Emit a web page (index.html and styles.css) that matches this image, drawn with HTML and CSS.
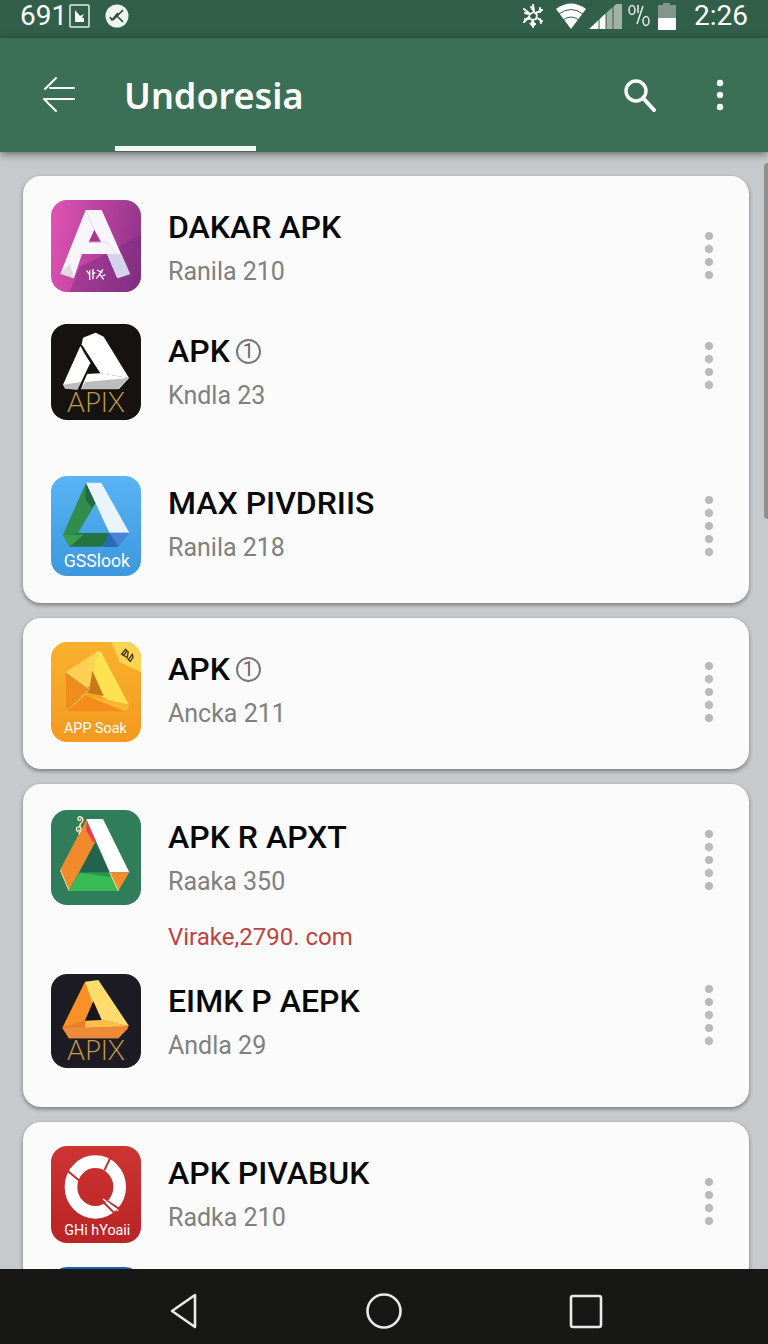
FILE: index.html
```
<!DOCTYPE html>
<html lang="en">
<head>
    <meta charset="UTF-8">
    <meta name="viewport" content="width=device-width, initial-scale=1.0">
    <title>Undoresia</title>
    <link rel="stylesheet" href="styles.css">
</head>
<body>
    <div class="status-bar">
        <span class="status-text">691</span>
        <svg class="status-note" width="22" height="26" viewBox="0 0 22 26">
            <rect x="1" y="2" width="19" height="22" rx="1" fill="none" stroke="#e4eee8" stroke-width="1.5"/>
            <path d="M6 7l5 6 4-2-2 4 2 0v4H6z" fill="#fff"/>
        </svg>
        <svg width="24" height="24" viewBox="0 0 24 24">
            <circle cx="12" cy="12" r="11.5" fill="#f0f4f1"/>
            <path d="M5 13l2 3 6-7M8 16L18 6M12 12l6 6" fill="none" stroke="#29483a" stroke-width="1.6"/>
        </svg>
        <div class="status-right">
            <svg width="22" height="26" viewBox="0 0 22 26" fill="none" stroke="#fff" stroke-width="2" stroke-linecap="round">
                <path d="M11 2l1 7M11 18v6M2 6l6 5M2 19l5-5M20 7l-6 3M20 18l-5-3M9 4l2 3M3 10l4 1M18 5l0 4M3 16l4 0M19 20l-1-4"/>
                <path d="M8 11l4-2 3 3-1 4-4 1-3-3z" stroke-width="1.6"/>
                <path d="M11 18l3 3-3 3-3-3z" fill="#fff" stroke-width="1"/>
            </svg>
            <svg class="wifi" width="32" height="26" viewBox="0 0 32 26">
                <path d="M1 6Q16-5 31 6L16 26z" fill="#fff"/>
                <path d="M4 11Q16 2 28 11M8 17Q16 11 24 17" fill="none" stroke="#315f49" stroke-width="1"/>
            </svg>
            <svg width="33" height="26" viewBox="0 0 33 26">
                <path d="M24 4l3-3h6v25H17V10z" fill="#a0b2a6"/>
                <path d="M0 26L17 10v16z" fill="#fff"/>
                <path d="M10 14v12M17 8v18M24 2v24" stroke="#315f49" stroke-width="1"/>
            </svg>
            <svg class="percent" width="22" height="24" viewBox="0 0 22 24" fill="none" stroke="#e8f0eb" stroke-width="1.5">
                <ellipse cx="4" cy="6" rx="3" ry="4.5"/>
                <ellipse cx="18" cy="17" rx="3" ry="4.5"/>
                <path d="M10 1v8M15 2L9 20"/>
            </svg>
            <svg class="battery" width="18" height="28" viewBox="0 0 18 28">
                <path d="M0 3h5V1h7v2h6v13H0z" fill="#82978b"/>
                <path d="M0 16h18v12H0z" fill="#fff"/>
            </svg>
            <span class="status-text">2:26</span>
        </div>
    </div>

    <header class="app-bar">
        <button class="icon-button" aria-label="Back">
            <svg width="34" height="38" viewBox="0 0 34 38" fill="none" stroke="#fff" stroke-width="2" stroke-linecap="round" stroke-linejoin="round">
                <path d="M14 2L3 13M8 12h24M32 23H2l12 12"/>
            </svg>
        </button>
        <h1 class="tab">Undoresia</h1>
        <button class="icon-button search" aria-label="Search">
            <svg width="34" height="34" viewBox="0 0 34 34" fill="none" stroke="#fff" stroke-linecap="round">
                <circle cx="13" cy="13" r="10" stroke-width="3.4"/>
                <path d="M20 20l11 12" stroke-width="4"/>
            </svg>
        </button>
        <button class="icon-button" aria-label="Menu">
            <svg width="10" height="34" viewBox="0 0 10 34" fill="#fff">
                <circle cx="5" cy="5" r="3.2"/>
                <circle cx="5" cy="17" r="3.2"/>
                <circle cx="5" cy="29" r="3.2"/>
            </svg>
        </button>
    </header>

    <main class="content">
        <section class="card">
            <article class="app">
                <svg class="app-icon pink" viewBox="34 30 270 276">
                    <path d="M120 230l80-38 104-60v174H90z" fill="#742a78" opacity=".4"/>
                    <path d="M138 60h48l85 192-38 13-31-73h-75l-24 71-41-12z" fill="#f8f6fa"/>
                    <path d="M164 119l20 38h-37z" fill="#a9378f"/>
                    <path d="M202 192h43l26 60-38 13z" fill="#d5d2ed"/>
                    <path d="M62 251l28-30 14 42-4 2z" fill="#dddce4"/>
                    <path d="M139 62l26 58M148 156h52l30 36" fill="none" stroke="#d4ceda" stroke-width="2"/>
                    <path d="M141 242l10 14M150 240v30M160 237v31M157 252l10-4M172 240l16 8M190 238l-20 28M178 250l14 18M188 258l9-4" fill="none" stroke="#fff" stroke-width="4"/>
                </svg>
                <div class="app-text">
                    <h2>DAKAR APK</h2>
                    <p>Ranila 210</p>
                </div>
                <button class="more low" aria-label="More"><i></i><i></i><i></i><i></i></button>
            </article>
            <article class="app">
                <svg class="app-icon black" viewBox="34 28 270 288">
                    <path d="M130 69l38-15 24 12 76 124-86-14-56-87z" fill="#fff"/>
                    <path d="M122 94l32 53-37 78-40-3-7-12z" fill="#fff"/>
                    <path d="M141 178l40-3 87 15-30 33H124z" fill="#fff"/>
                    <path d="M70 210l54-8-8 21H80zM136 202l132-12-34 34H124z" fill="#bdbdbd"/>
                    <path d="M125 102l57 74h-40l13-29z" fill="#15120f"/>
                    <path d="M154 147l-38 80" stroke="#15120f" stroke-width="6"/>
                    <text class="thin-label" x="82" y="292">APIX</text>
                </svg>
                <div class="app-text">
                    <h2>APK <span class="badge">1</span></h2>
                    <p>Kndla 23</p>
                </div>
                <button class="more high" aria-label="More"><i></i><i></i><i></i><i></i></button>
            </article>
            <article class="app spaced">
                <svg class="app-icon blue" viewBox="34 34 270 300">
                    <path d="M139 54l30 60-54 91-45 5z" fill="#328c4b"/>
                    <path d="M139 54l30 60-12 14-20-22z" fill="#206b42"/>
                    <path d="M139 54h46l84 150h-60z" fill="#eaf4fc"/>
                    <path d="M70 210l45-5h95l-20 41H90z" fill="#247443"/>
                    <path d="M70 210h62l-42 36z" fill="#3b9d50"/>
                    <path d="M209 204h60l-32 43h-48z" fill="#4686d5"/>
                    <path d="M209 204l28 43h-48z" fill="#286bb8"/>
                    <text class="icon-label" x="72" y="306" font-size="53">GSSlook</text>
                </svg>
                <div class="app-text">
                    <h2>MAX PIVDRIIS</h2>
                    <p>Ranila 218</p>
                </div>
                <button class="more" aria-label="More"><i></i><i></i><i></i><i></i><i></i></button>
            </article>
        </section>

        <section class="card">
            <article class="app">
                <svg class="app-icon orange" viewBox="34 34 270 300">
                    <path d="M215 34h90v91l-65-30z" fill="#ffd453"/>
                    <path d="M78 124l96-63 6 6-30 100-16 8z" fill="#ffd052"/>
                    <path d="M78 124l72 52-70 66z" fill="#f08c1d"/>
                    <path d="M174 61l10 2 84 160-10 18-108-66z" fill="#ffe252"/>
                    <path d="M158 120l34 76-50-10 8-14z" fill="#c9781b"/>
                    <path d="M80 242l58-48 129 28-14 20z" fill="#f48c1c"/>
                    <path d="M138 194l129 28-14 20z" fill="#ffb52e"/>
                    <path d="M78 124l72 52-70 66M174 61l-26 60" fill="none" stroke="#ffe082" stroke-width="2"/>
                    <path d="M246 70l12-14 4 5-10 13zM252 74l8 5M266 62l-4 22M278 71l-12 16 6 5 8-12z" fill="none" stroke="#3d2d09" stroke-width="4"/>
                    <text class="icon-label" x="73" y="306" font-size="43">APP Soak</text>
                </svg>
                <div class="app-text">
                    <h2>APK <span class="badge">1</span></h2>
                    <p>Ancka 211</p>
                </div>
                <button class="more" aria-label="More"><i></i><i></i><i></i><i></i><i></i></button>
            </article>
        </section>

        <section class="card">
            <article class="app">
                <svg class="app-icon green" viewBox="34 30 270 285">
                    <path d="M166 126l-47 92h92z" fill="#236450"/>
                    <path d="M141 58l26 68-79 146-27-62z" fill="#f18a2c"/>
                    <path d="M141 60l28 56-7 12-22-36z" fill="#e53c58"/>
                    <path d="M140 57h50l79 160h-59z" fill="#fff"/>
                    <path d="M119 218h91l26 55H88z" fill="#38bb55"/>
                    <path d="M119 218h91l6 14z" fill="#249b48"/>
                    <path d="M210 217h59l-33 56z" fill="#f48d2c"/>
                    <path d="M62 210l26 62M210 217l26 56" stroke="#ffe0a0" stroke-width="3"/>
                    <path d="M118 103c0-10 8-8 6-18-3-8-14-5-14 3s10 6 8 0M122 80c-6-10 8-10 8-20s-14-14-15-5 10 8 8 0" fill="none" stroke="#fff3d0" stroke-width="4"/>
                </svg>
                <div class="app-text">
                    <h2>APK R APXT</h2>
                    <p>Raaka 350</p>
                </div>
                <button class="more" aria-label="More"><i></i><i></i><i></i><i></i><i></i></button>
            </article>
            <a class="site-link" href="#">Virake,2790. com</a>
            <article class="app">
                <svg class="app-icon dark" viewBox="34 27 270 282">
                    <path d="M136 50l30 65-32 55-66 18z" fill="#fb9029"/>
                    <path d="M136 50l40-5 92 138-88-12z" fill="#ffdc6b"/>
                    <path d="M68 188l68-22 50-2 81 20-31 36H88z" fill="#e8802b"/>
                    <path d="M136 166l50-2 81 20-130 4z" fill="#ffbd4c"/>
                    <path d="M161 108l25 57-50 2z" fill="#17161c"/>
                    <path d="M68 188h199l-31 32H88z" fill="#ed8b38"/>
                    <text class="thin-label" x="82" y="284">APIX</text>
                </svg>
                <div class="app-text">
                    <h2>EIMK P AEPK</h2>
                    <p>Andla 29</p>
                </div>
                <button class="more high" aria-label="More"><i></i><i></i><i></i><i></i><i></i></button>
            </article>
        </section>

        <section class="card">
            <article class="app">
                <svg class="app-icon red" viewBox="34 17 270 291">
                    <ellipse cx="167" cy="140" rx="73" ry="76" fill="none" stroke="#fff" stroke-width="38"/>
                    <path d="M214 48l-20 42M80 88l40 34M190 174l52 34M188 182l40 40" stroke="#c62d2d" stroke-width="6"/>
                    <path d="M92 84l28 28M190 176l46 36" stroke="#fff" stroke-width="4"/>
                    <text class="icon-label" x="74" y="283" font-size="43">GHi hYoaii</text>
                </svg>
                <div class="app-text">
                    <h2>APK PIVABUK</h2>
                    <p>Radka 210</p>
                </div>
                <button class="more low" aria-label="More"><i></i><i></i><i></i><i></i></button>
            </article>
            <div class="app next">
                <div class="app-icon azure"></div>
            </div>
        </section>
        <div class="scroll-thumb"></div>
    </main>

    <nav class="nav-bar">
        <button class="icon-button" aria-label="Back">
            <svg width="38" height="38" viewBox="0 0 38 38"><path d="M30 3v32L7 19z"/></svg>
        </button>
        <button class="icon-button" aria-label="Home">
            <svg width="38" height="38" viewBox="0 0 38 38"><circle cx="18" cy="19" r="16.5"/></svg>
        </button>
        <button class="icon-button" aria-label="Recent apps">
            <svg width="38" height="38" viewBox="0 0 38 38"><rect x="4" y="4" width="30" height="31" rx="2"/></svg>
        </button>
    </nav>
</body>
</html>
```
FILE: styles.css
```
* {
    box-sizing: border-box;
}

body {
    margin: 0;
    height: 100vh;
    display: flex;
    flex-direction: column;
    overflow: hidden;
    font-family: Roboto, "Liberation Sans", sans-serif;
    background: #c7cacd;
    color: #080808;
}

h1, h2, p {
    margin: 0;
    font-weight: 500;
}

svg {
    display: block;
    flex: none;
}

button {
    border: none;
    background: none;
    padding: 0;
    cursor: pointer;
}

/* Status bar */
.status-bar {
    height: 38px;
    flex: none;
    display: flex;
    align-items: center;
    padding: 0 20px 6px;
    background: #315f49;
    color: #fff;
}

.status-text {
    font-size: 28px;
    line-height: 32px;
}

.status-note {
    margin: 0 14px 0 2px;
}

.status-right {
    margin-left: auto;
    display: flex;
    align-items: center;
}

.wifi {
    margin: 0 2px 0 11px;
}

.percent {
    margin: 0 8px 0 6px;
}

.battery {
    margin-right: 18px;
}

/* App bar */
.app-bar {
    height: 114px;
    flex: none;
    display: flex;
    align-items: center;
    padding: 0 43px 0 42px;
    background: #3b7057;
    box-shadow: 0 2px 8px rgba(0, 0, 0, 0.5);
    position: relative;
    z-index: 1;
}

.icon-button {
    display: flex;
    align-items: center;
    justify-content: center;
}

.tab {
    height: 100%;
    margin-left: 39px;
    margin-right: auto;
    padding-left: 9px;
    font-family: "Noto Sans", sans-serif;
    font-size: 36px;
    font-weight: 600;
    line-height: 116px;
    color: #fff;
    background: linear-gradient(#f4f6f3, #f4f6f3) 0 108px / 141px 5px no-repeat;
}

.search {
    margin-right: 58px;
}

/* List */
.content {
    flex: 1;
    min-height: 0;
    overflow: hidden;
    position: relative;
    display: flex;
    flex-direction: column;
    gap: 15px;
    padding: 24px 19px 0 23px;
}

.card {
    flex: none;
    padding: 24px 28px 27px;
    border-radius: 18px;
    background: #fafbfa;
    box-shadow: 0 2px 4px rgba(0, 0, 0, 0.4);
}

.card:nth-child(3) {
    padding: 26px 28px 39px;
}

.app {
    display: flex;
    align-items: flex-start;
}

.app + .app {
    margin-top: 30px;
}

.app + .spaced {
    margin-top: 56px;
}

.app + .next {
    margin-top: 24px;
}

.app-icon {
    width: 90px;
    border-radius: 16px;
}

.pink {
    background: linear-gradient(100deg, #e354b4, #8a3189);
}

.black {
    background: #15120f;
}

.blue {
    background: linear-gradient(#58b4f4, #3d97dc);
}

.orange {
    background: linear-gradient(#f9b12c, #f39a1f);
}

.green {
    background: #307d5b;
}

.dark {
    background: #1d1c24;
}

.red {
    background: linear-gradient(#cd3434, #ba2424);
}

.azure {
    height: 90px;
    background: #1d62ae;
}

.icon-label {
    font-family: Roboto, sans-serif;
    font-weight: 400;
    fill: #fff;
}

.thin-label {
    font-family: Lato, sans-serif;
    font-size: 82px;
    font-weight: 300;
    fill: #c39b4a;
}

.app-text {
    flex: 1;
    min-width: 0;
    padding-left: 27px;
    padding-top: 4px;
}

.app-text h2 {
    display: flex;
    align-items: center;
    gap: 6px;
    font-size: 32px;
    line-height: 46px;
}

.app-text p {
    font-size: 25px;
    font-weight: 400;
    line-height: 44px;
    color: #808080;
}

.badge {
    width: 25px;
    height: 25px;
    border: 2px solid #777;
    border-radius: 50%;
    font-size: 20px;
    font-weight: 400;
    line-height: 21px;
    text-align: center;
    color: #666;
}

.more {
    flex: none;
    width: 24px;
    height: 100px;
    display: flex;
    flex-direction: column;
    align-items: center;
    justify-content: center;
    gap: 5px;
}

.more i {
    width: 8px;
    height: 8px;
    border-radius: 50%;
    background: #b9b9b9;
}

.low {
    height: 94px;
    padding-top: 16px;
}

.high {
    height: 82px;
}

.site-link {
    display: block;
    padding: 4px 0 14px 117px;
    font-size: 24px;
    line-height: 46px;
    color: #bf4340;
    text-decoration: none;
}

.scroll-thumb {
    position: absolute;
    top: 11px;
    right: 0;
    width: 4px;
    height: 356px;
    border-radius: 4px 0 0 4px;
    background: #8d908f;
}

/* System navigation */
.nav-bar {
    height: 75px;
    flex: none;
    display: flex;
    justify-content: space-between;
    align-items: center;
    padding: 8px 163px 0 165px;
    background: #171716;
}

.nav-bar svg {
    fill: none;
    stroke: #e9e9e9;
    stroke-width: 2.6;
    stroke-linejoin: round;
}
```
